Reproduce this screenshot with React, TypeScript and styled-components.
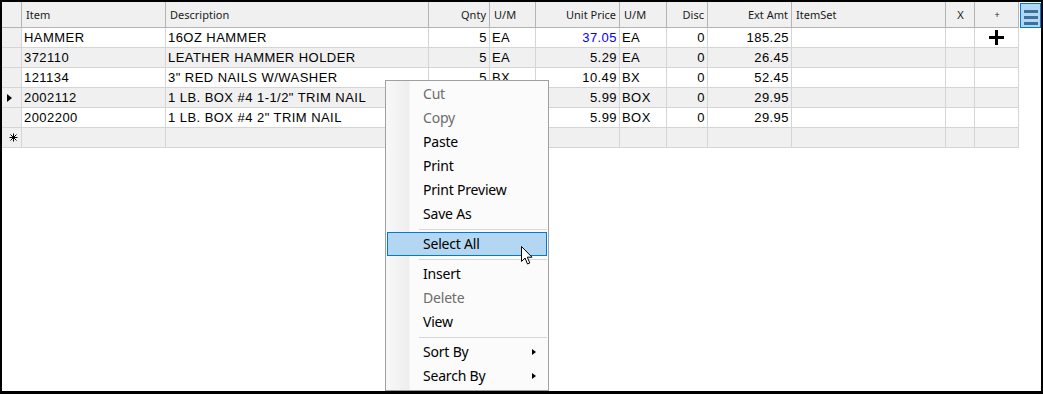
import React from 'react';
import styled, { createGlobalStyle } from 'styled-components';

const GlobalStyle = createGlobalStyle`
  html, body {
    margin: 0;
    padding: 0;
    background: #fff;
  }
  body {
    font-family: "Liberation Sans", Arial, sans-serif;
  }
`;

// column widths, each including its 1px right grid line
const COLS = [20, 144, 263, 61, 46, 84, 47, 41, 84, 154, 29, 44];

const Frame = styled.div`
  position: relative;
  width: 1043px;
  height: 394px;
  box-sizing: border-box;
  border: solid #000;
  border-width: 2px 2px 3px 2px;
  background: #fff;
  overflow: hidden;
  display: flex;
  align-items: flex-start;
`;

const Grid = styled.div`
  display: grid;
  grid-template-columns: ${COLS.map((c) => `${c}px`).join(' ')};
  grid-template-rows: 26px repeat(6, 20px);
`;

const HeaderCell = styled.div<{ $align?: string; $small?: boolean }>`
  box-sizing: border-box;
  display: flex;
  align-items: center;
  justify-content: ${(p) => p.$align === 'right' ? 'flex-end' : p.$align === 'center' ? 'center' : 'flex-start'};
  padding: 0 3px 0 4px;
  background: #f0f0f0;
  border-right: 1px solid #b4b4b4;
  border-bottom: 1px solid #b4b4b4;
  font-family: "Noto Sans", "Liberation Sans", sans-serif;
  font-size: ${(p) => (p.$small ? '9px' : '11px')};
  color: #1a1a1a;
  white-space: nowrap;
  overflow: hidden;
`;

const Cell = styled.div<{ $align?: string; $alt?: boolean; $color?: string }>`
  box-sizing: border-box;
  display: flex;
  align-items: center;
  justify-content: ${(p) => p.$align === 'right' ? 'flex-end' : p.$align === 'center' ? 'center' : 'flex-start'};
  padding: 0 2px 0 2px;
  background: ${(p) => (p.$alt ? '#f0f0f0' : '#fff')};
  border-right: 1px solid #d5d5d5;
  border-bottom: 1px solid #d5d5d5;
  font-size: 13px;
  letter-spacing: 0.45px;
  color: ${(p) => p.$color || '#000'};
  white-space: nowrap;
  overflow: hidden;
`;

const RowHeader = styled(Cell)<{ $newRow?: boolean }>`
  background: #f0f0f0;
  padding: 0 0 0 ${(p) => (p.$newRow ? '7px' : '5px')};
`;

const CurrentMarker = styled.span`
  width: 0;
  height: 0;
  border-left: 5px solid #000;
  border-top: 4.5px solid transparent;
  border-bottom: 4.5px solid transparent;
`;

const MenuButton = styled.div`
  box-sizing: border-box;
  width: 21px;
  height: 25px;
  margin: 1px 0 0 1px;
  padding-top: 6px;
  background: #b3d7f3;
  border: 1px solid #0078d7;
  display: flex;
  flex-direction: column;
  align-items: center;
  gap: 3px;
`;

const Bar = styled.span`
  width: 14px;
  height: 3px;
  background: #3d6f9f;
`;

const Menu = styled.div`
  position: absolute;
  left: 383px;
  top: 78px;
  width: 164px;
  height: 311px;
  box-sizing: border-box;
  padding: 1px;
  border: 1px solid #a0a0a0;
  background:
    linear-gradient(to right, #f8f8f8 0, #eeeeee 23px, #fbfbfb 24px) no-repeat;
  background-color: #fbfbfb;
  font-family: "Noto Sans", "Open Sans", sans-serif;
  font-size: 14px;
`;

const MenuItem = styled.div<{ $disabled?: boolean; $active?: boolean }>`
  position: relative;
  box-sizing: border-box;
  height: 24px;
  display: flex;
  align-items: center;
  padding: 0 0 2px 35px;
  letter-spacing: -0.2px;
  color: ${(p) => (p.$disabled ? '#6d6d6d' : '#000')};
  background: ${(p) => (p.$active ? '#b3d7f3' : 'transparent')};
  border: 1px solid ${(p) => (p.$active ? '#0078d7' : 'transparent')};
`;

const Separator = styled.div`
  height: 6px;
  display: flex;
  align-items: center;
  padding-left: 32px;

  &::after {
    content: '';
    flex: 1;
    height: 1px;
    background: #d7d7d7;
  }
`;

const SubArrow = styled.span`
  position: absolute;
  right: 10px;
  top: 8px;
  width: 0;
  height: 0;
  border-left: 4px solid #000;
  border-top: 3.5px solid transparent;
  border-bottom: 3.5px solid transparent;
`;

const Pointer = styled.svg`
  position: absolute;
  left: 519px;
  top: 244px;
`;

type Row = [string, string, string, string, string, string, string, string];

const rows: Row[] = [
  ['HAMMER', '16OZ HAMMER', '5', 'EA', '37.05', 'EA', '0', '185.25'],
  ['372110', 'LEATHER HAMMER HOLDER', '5', 'EA', '5.29', 'EA', '0', '26.45'],
  ['121134', '3" RED NAILS W/WASHER', '5', 'BX', '10.49', 'BX', '0', '52.45'],
  ['2002112', '1 LB. BOX #4 1-1/2" TRIM NAIL', '5', 'BOX', '5.99', 'BOX', '0', '29.95'],
  ['2002200', '1 LB. BOX #4 2" TRIM NAIL', '5', 'BOX', '5.99', 'BOX', '0', '29.95'],
];

const headers: [string, string][] = [
  ['', 'left'],
  ['Item', 'left'],
  ['Description', 'left'],
  ['Qnty', 'right'],
  ['U/M', 'left'],
  ['Unit Price', 'right'],
  ['U/M', 'left'],
  ['Disc', 'right'],
  ['Ext Amt', 'right'],
  ['ItemSet', 'left'],
  ['X', 'center'],
  ['+', 'center'],
];

const aligns = ['left', 'left', 'right', 'left', 'right', 'left', 'right', 'right'];

const PlusIcon = () => (
  <svg width="15" height="15" viewBox="0 0 15 15">
    <rect x="6" y="0" width="3" height="15" fill="#000" />
    <rect x="0" y="6" width="15" height="3" fill="#000" />
  </svg>
);

const NewRowIcon = () => (
  <svg width="9" height="9" viewBox="0 0 9 9" stroke="#000" strokeWidth="1">
    <line x1="4.5" y1="0.5" x2="4.5" y2="8.5" />
    <line x1="0.5" y1="4.5" x2="8.5" y2="4.5" />
    <line x1="1.5" y1="1.5" x2="7.5" y2="7.5" />
    <line x1="7.5" y1="1.5" x2="1.5" y2="7.5" />
  </svg>
);

const menuItems = [
  { label: 'Cut', disabled: true },
  { label: 'Copy', disabled: true },
  { label: 'Paste' },
  { label: 'Print' },
  { label: 'Print Preview' },
  { label: 'Save As' },
  { sep: true },
  { label: 'Select All', active: true },
  { sep: true },
  { label: 'Insert' },
  { label: 'Delete', disabled: true },
  { label: 'View' },
  { sep: true },
  { label: 'Sort By', sub: true },
  { label: 'Search By', sub: true },
];

const App = () => (
  <>
    <GlobalStyle />
    <Frame>
      <Grid>
        {headers.map(([h, a], i) => (
          <HeaderCell key={ i } $align={ a } $small={ h === '+' }>
            {h}
          </HeaderCell>
        ))}
        {rows.map((r, ri) => {
          const alt = ri % 2 === 1;
          return (
            <React.Fragment key={ ri }>
              <RowHeader>{ri === 3 && <CurrentMarker />}</RowHeader>
              {r.map((v, ci) => (
                <Cell
                  key={ ci }
                  $align={ aligns[ci] }
                  $alt={ alt }
                  $color={ ri === 0 && ci === 4 ? '#0000ff' : undefined }>
                  {v}
                </Cell>
              ))}
              <Cell $alt={ alt } />
              <Cell $alt={ alt } />
              <Cell $alt={ alt } $align="center">
                {ri === 0 && <PlusIcon />}
              </Cell>
            </React.Fragment>
          );
        })}
        <RowHeader $newRow>
          <NewRowIcon />
        </RowHeader>
        {COLS.slice(1).map((_, i) => (
          <Cell key={ i } $alt />
        ))}
      </Grid>
      <MenuButton>
        <Bar />
        <Bar />
        <Bar />
      </MenuButton>

      <Menu>
        {menuItems.map((m, i) =>
          m.sep ? (
            <Separator key={ i } />
          ) : (
            <MenuItem key={ i } $disabled={ m.disabled } $active={ m.active }>
              {m.label}
              {m.sub && <SubArrow />}
            </MenuItem>
          ),
        )}
      </Menu>

      <Pointer width="13" height="20" viewBox="0 0 13 20">
        <path
          d="M0.5 0.5 L0.5 15.5 L4 12 L6.5 18 L8.8 17 L6.3 11.2 L11 11.2 Z"
          fill="#fff"
          stroke="#000"
          strokeWidth="1"
          strokeLinejoin="miter" />
      </Pointer>
    </Frame>
  </>
);

export default App;
